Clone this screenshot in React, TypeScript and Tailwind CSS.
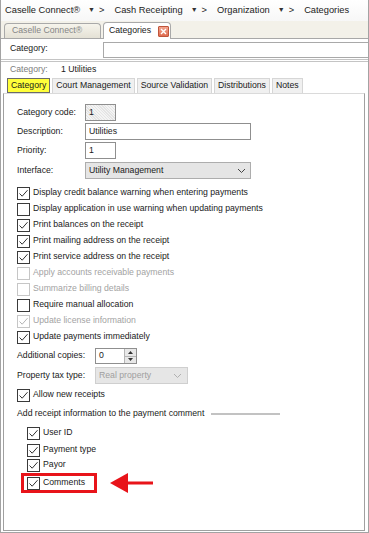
import React from "react";

const FONT = "font-['Liberation_Sans',Arial,sans-serif]";

function Box({ checked, disabled }: { checked?: boolean; disabled?: boolean }) {
  return (
    <span
      className={
        disabled
          ? "w-[13px] h-[13px] border border-[#c6c6c6] bg-white flex items-center justify-center shrink-0"
          : "w-[13px] h-[13px] border border-[#3a3a3a] bg-white flex items-center justify-center shrink-0"
      }
    >
      {checked && (
        <svg width="11" height="11" viewBox="0 0 11 11">
          <path
            d="M1.5 5.5 L4.2 8.2 L9.5 2.2"
            fill="none"
            stroke={disabled ? "#b4b4b4" : "#333333"}
            strokeWidth="1"
          />
        </svg>
      )}
    </span>
  );
}

function Check({
  label,
  checked,
  disabled,
  className = "",
}: {
  label: string;
  checked?: boolean;
  disabled?: boolean;
  className?: string;
}) {
  return (
    <div className={"flex items-center h-[16px] gap-[2px] " + className}>
      <Box checked={checked} disabled={disabled} />
      <span className={disabled ? "text-[#a3a3a3] pl-[1px]" : "text-[#1a1a1a] pl-[1px]"}>{label}</span>
    </div>
  );
}

function Chevron({ color }: { color: string }) {
  return (
    <svg width="9" height="6" viewBox="0 0 9 6">
      <path d="M1 1 L4.5 4.5 L8 1" fill="none" stroke={color} strokeWidth="1" />
    </svg>
  );
}

function Crumb({ text }: { text: string }) {
  return (
    <div className="flex items-center">
      <span>{text}</span>
      <span className="ml-[8px] text-[7px] text-[#333]">▼</span>
      <span className="ml-[4px]">&gt;</span>
    </div>
  );
}

export default function App() {
  return (
    <div
      className={
        "w-[369px] h-[533px] bg-white border-x border-b border-[#a3a3a3] flex flex-col overflow-hidden text-[8.7px] text-[#1a1a1a] " +
        FONT
      }
    >
      {/* breadcrumb */}
      <div className="h-[21px] shrink-0 flex items-center pl-[4px] text-[9.3px] text-[#222] gap-[10px] bg-[linear-gradient(#ffffff,#f7f7f7)]">
        <Crumb text="Caselle Connect®" />
        <Crumb text="Cash Receipting" />
        <Crumb text="Organization" />
        <span>Categories</span>
      </div>

      {/* document tabs */}
      <div className="h-[18px] shrink-0 bg-[#f3f1e9] border-b border-[#a8a8a8] flex items-end pl-[3px] gap-[2px]">
        <div className="w-[97px] h-[15px] rounded-t-[4px] border border-b-0 border-[#a9a9a9] bg-[linear-gradient(#f6f4ec,#e4e1d5)] text-[#858585] flex items-center pl-[7px]">
          Caselle Connect®
        </div>
        <div className="w-[68px] h-[17px] -mb-[1px] rounded-t-[4px] border border-b-0 border-[#a9a9a9] bg-white flex items-center pl-[5px] gap-[7px]">
          <span>Categories</span>
          <span className="w-[11px] h-[11px] rounded-[1px] border border-[#c0553b] bg-[linear-gradient(#f2a58f,#e06c50)] flex items-center justify-center">
            <svg width="7" height="7" viewBox="0 0 7 7">
              <path d="M1 1 L6 6 M6 1 L1 6" stroke="white" strokeWidth="1.4" />
            </svg>
          </span>
        </div>
      </div>

      {/* Category search row */}
      <div className="h-[20px] shrink-0 flex items-center pl-[9px]">
        <span className="w-[93px]">Category:</span>
        <div className="flex-1 h-[16px] border border-r-0 border-[#a9a9a9] bg-white mt-[2px]" />
      </div>
      <div className="h-[3px] shrink-0 border-t border-b border-[#c4c4c4]" />

      {/* selected category */}
      <div className="h-[14px] shrink-0 flex items-center pl-[9px] mt-[1px]">
        <span className="w-[51px] text-[#7d7d7d]">Category:</span>
        <span>1 Utilities</span>
      </div>

      {/* inner tabs */}
      <div className="h-[16px] shrink-0 flex items-end pl-[6px] gap-[2px] mr-[3px]">
        <div className="h-[15px] px-[3px] border border-[#6b6b6b] bg-[#ffff3a] flex items-center">Category</div>
        <div className="h-[15px] px-[3px] border border-b-0 border-[#d6d6d6] bg-[#f0f0f0] flex items-center">
          Court Management
        </div>
        <div className="h-[15px] px-[3px] border border-b-0 border-[#d6d6d6] bg-[#f0f0f0] flex items-center">
          Source Validation
        </div>
        <div className="h-[15px] px-[3px] border border-b-0 border-[#d6d6d6] bg-[#f0f0f0] flex items-center">
          Distributions
        </div>
        <div className="h-[15px] px-[3px] border border-b-0 border-[#d6d6d6] bg-[#f0f0f0] flex items-center">Notes</div>
      </div>

      {/* panel */}
      <div className="flex-1 ml-[2px] mr-[3px] mb-[1px] border border-[#a0a0a0] border-t-[#dadada] flex flex-col pl-[13px] pt-[10px]">
        <div className="flex items-center h-[17px]">
          <span className="w-[68px]">Category code:</span>
          <div className="w-[31px] h-[17px] border border-[#8f8f8f] bg-[repeating-linear-gradient(45deg,#f4f4f4_0px,#f4f4f4_1px,#e4e4e4_1px,#e4e4e4_2px)] flex items-center pl-[3px]">
            1
          </div>
        </div>
        <div className="flex items-center h-[17px] mt-[2px]">
          <span className="w-[68px]">Description:</span>
          <div className="w-[166px] h-[17px] border border-[#8f8f8f] bg-white flex items-center pl-[3px]">Utilities</div>
        </div>
        <div className="flex items-center h-[17px] mt-[2px]">
          <span className="w-[68px]">Priority:</span>
          <div className="w-[31px] h-[17px] border border-[#8f8f8f] bg-white flex items-center pl-[3px]">1</div>
        </div>
        <div className="flex items-center h-[17px] mt-[3px]">
          <span className="w-[68px]">Interface:</span>
          <div className="w-[166px] h-[17px] border border-[#adadad] bg-[#e5e5e5] flex items-center pl-[3px] pr-[4px] justify-between">
            <span>Utility Management</span>
            <Chevron color="#444" />
          </div>
        </div>

        <div className="mt-[6px] flex flex-col">
          <Check label="Display credit balance warning when entering payments" checked />
          <Check label="Display application in use warning when updating payments" />
          <Check label="Print balances on the receipt" checked />
          <Check label="Print mailing address on the receipt" checked />
          <Check label="Print service address on the receipt" checked />
          <Check label="Apply accounts receivable payments" disabled />
          <Check label="Summarize billing details" disabled />
          <Check label="Require manual allocation" />
          <Check label="Update license information" checked disabled />
          <Check label="Update payments immediately" checked />
        </div>

        <div className="flex items-center h-[16px] mt-[3px]">
          <span className="w-[78px]">Additional copies:</span>
          <div className="w-[42px] h-[16px] border border-[#8f8f8f] bg-white flex items-center justify-between pl-[3px]">
            <span>0</span>
            <div className="w-[12px] h-[14px] flex flex-col border-l border-[#b5b5b5]">
              <div className="flex-1 bg-[#e8e8e8] border-b border-[#b5b5b5] flex items-center justify-center">
                <svg width="5" height="3" viewBox="0 0 5 3">
                  <path d="M0 3 L2.5 0 L5 3 Z" fill="#333" />
                </svg>
              </div>
              <div className="flex-1 bg-[#e8e8e8] flex items-center justify-center">
                <svg width="5" height="3" viewBox="0 0 5 3">
                  <path d="M0 0 L2.5 3 L5 0 Z" fill="#333" />
                </svg>
              </div>
            </div>
          </div>
        </div>
        <div className="flex items-center h-[17px] mt-[3px]">
          <span className="w-[78px]">Property tax type:</span>
          <div className="w-[93px] h-[17px] border border-[#cfcfcf] bg-[#e6e6e6] flex items-center pl-[3px] pr-[5px] justify-between text-[#a0a0a0]">
            <span>Real property</span>
            <Chevron color="#b0b0b0" />
          </div>
        </div>

        <Check label="Allow new receipts" checked className="mt-[3px]" />

        <div className="flex items-center h-[16px] mt-[3px]">
          <span>Add receipt information to the payment comment</span>
          <div className="ml-[7px] w-[69px] h-[2px] bg-[#c2c2c2]" />
        </div>

        <div className="flex flex-col pl-[10px] mt-[3px]">
          <Check label="User ID" checked />
          <Check label="Payment type" checked className="mt-[1px]" />
          <div className="flex items-center h-[14px] gap-[2px]">
            <Box checked />
            <span className="pl-[1px]">Payor</span>
          </div>
        </div>
        <div className="flex items-center">
          <div className="ml-[4px] w-[76px] h-[20px] border-[3px] border-[#e8141a] flex items-center pl-[3px] gap-[2px]">
            <Box checked />
            <span className="pl-[1px]">Comments</span>
          </div>
          <svg className="ml-[13px]" width="44" height="22" viewBox="0 0 44 22">
            <path d="M0 11 L18 1 L18 21 Z" fill="#e8141a" />
            <rect x="16" y="9.5" width="27" height="3" fill="#e8141a" />
          </svg>
        </div>
      </div>
    </div>
  );
}
